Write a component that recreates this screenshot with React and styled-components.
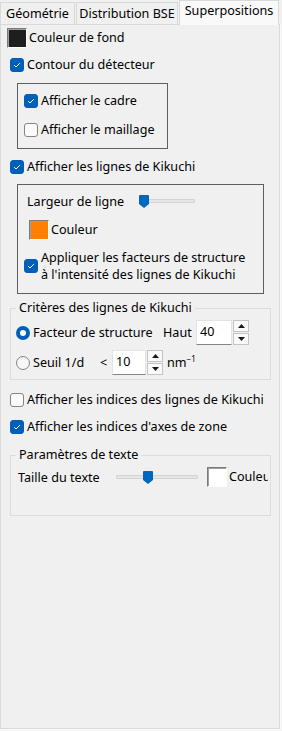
import React from 'react';
import styled, { createGlobalStyle } from 'styled-components';

const GlobalStyle = createGlobalStyle`
  html, body {
    margin: 0;
    padding: 0;
    background: #f0f0f0;
  }
  body {
    font-family: 'Noto Sans', 'Segoe UI', sans-serif;
    font-size: 12.6px;
    color: #000;
  }
`;

const ACCENT = '#005fb8';

const Window = styled.div`
  width: 282px;
  height: 731px;
  display: flex;
  flex-direction: column;
  overflow: hidden;
`;

const TabBar = styled.div`
  display: flex;
  align-items: flex-end;
  height: 24px;
`;

const Tab = styled.div`
  box-sizing: border-box;
  width: ${(p) => p.$width}px;
  height: ${(p) => (p.$active ? 25 : 22)}px;
  margin-bottom: ${(p) => (p.$active ? -1 : 0)}px;
  padding-top: ${(p) => (p.$active ? 2 : 3)}px;
  text-align: center;
  line-height: 16px;
  white-space: nowrap;
  border: 1px solid #d9d9d9;
  border-bottom: none;
  background: ${(p) => (p.$active ? '#f9f9f9' : '#f0f0f0')};
  position: relative;
  z-index: ${(p) => (p.$active ? 1 : 0)};
  & + & {
    margin-left: 1px;
  }
`;

const Pane = styled.div`
  box-sizing: border-box;
  width: 280px;
  height: 705px;
  border: 1px solid #d9d9d9;
  box-shadow: 1px 1px 0 #fbfbfb;
  background: #f0f0f0;
  padding: 3px 0 0 6px;
  display: flex;
  flex-direction: column;
  align-items: flex-start;
`;

const SwatchRow = styled.div`
  display: flex;
  align-items: center;
  gap: 2px;
  margin-top: ${(p) => p.$top || 0}px;
  margin-left: ${(p) => p.$indent || 0}px;
  height: 20px;
  line-height: 16px;
  white-space: nowrap;
`;

const Swatch = styled.span`
  box-sizing: border-box;
  width: 20px;
  height: 20px;
  flex: none;
  border: 1px solid #fcfcfc;
  border-top-color: #7a7a7a;
  border-left-color: #7a7a7a;
  box-shadow: inset 1px 1px 0 #a0a0a0;
  background: ${(p) => p.$color};
`;

const CheckRow = styled.label`
  display: flex;
  align-items: center;
  gap: 3px;
  margin-top: ${(p) => p.$top || 0}px;
  margin-left: ${(p) => p.$indent || 0}px;
  min-height: 14px;
  line-height: ${(p) => (p.$multi ? 17 : 14)}px;
  white-space: nowrap;
`;

const Box = styled.span`
  box-sizing: border-box;
  width: 14px;
  height: 14px;
  flex: none;
  border-radius: 3px;
  border: 1px solid ${(p) => (p.$checked ? ACCENT : '#858585')};
  background: ${(p) => (p.$checked ? ACCENT : '#fbfbfb')};
  display: flex;
  align-items: center;
  justify-content: center;
`;

const RadioDot = styled.span`
  box-sizing: border-box;
  width: 14px;
  height: 14px;
  flex: none;
  border-radius: 50%;
  border: ${(p) => (p.$checked ? `4px solid ${ACCENT}` : '1px solid #858585')};
  background: ${(p) => (p.$checked ? '#ffffff' : '#f7f7f7')};
`;

const Frame = styled.div`
  box-sizing: border-box;
  width: ${(p) => p.$width}px;
  height: ${(p) => p.$height}px;
  margin-top: ${(p) => p.$top}px;
  margin-left: 10px;
  border: 1px solid #5e5e5e;
  padding: ${(p) => p.$pad};
  display: flex;
  flex-direction: column;
  align-items: flex-start;
`;

const Group = styled.fieldset`
  box-sizing: border-box;
  width: 261px;
  min-height: ${(p) => p.$height}px;
  margin: ${(p) => p.$top}px 0 0 3px;
  padding: 4px 0 4px 5px;
  border: 1px solid #dcdcdc;
  display: flex;
  flex-direction: column;
  gap: 5px;
  min-width: 0;
  overflow: hidden;
`;

const Legend = styled.legend`
  padding: 0 3px;
  line-height: 16px;
`;

const Line = styled.div`
  display: flex;
  align-items: center;
  height: ${(p) => p.$height || 14}px;
  white-space: nowrap;
`;

const Cell = styled.div`
  display: flex;
  align-items: center;
  gap: 3px;
  width: ${(p) => p.$width}px;
  flex: none;
  padding-left: ${(p) => p.$pad || 0}px;
  box-sizing: border-box;
`;

const Spin = styled.div`
  display: flex;
  gap: 1px;
  height: 25px;
`;

const SpinField = styled.div`
  box-sizing: border-box;
  width: ${(p) => p.$width}px;
  height: 25px;
  background: #ffffff;
  border: 1px solid #e3e3e3;
  border-bottom: 1px solid #868686;
  padding: 0 0 0 3px;
  line-height: 22px;
`;

const SpinButtons = styled.div`
  display: flex;
  flex-direction: column;
  gap: 1px;
  width: 16px;
`;

const SpinButton = styled.div`
  box-sizing: border-box;
  height: 12px;
  border: 1px solid #c4c4c4;
  background: #f9f9f9;
  display: flex;
  align-items: center;
  justify-content: center;
`;

const SliderBody = styled.div`
  position: relative;
  width: ${(p) => p.$width}px;
  height: 13px;
  flex: none;
`;

const Track = styled.div`
  box-sizing: border-box;
  margin-top: 4px;
  height: 4px;
  border: 1px solid #d3d3d3;
  background: #e6e6e6;
  border-radius: 1px;
`;

const Thumb = styled.svg`
  position: absolute;
  top: 0;
`;

const Sup = styled.sup`
  font-size: 8px;
  line-height: 0;
  vertical-align: 5px;
`;

const ClipRow = styled.div`
  display: flex;
  align-items: center;
  height: 20px;
  width: 252px;
  overflow: hidden;
  white-space: nowrap;
`;

const Check = ({ checked }) => (
  <Box $checked={checked}>
    {checked && (
      <svg width="10" height="10" viewBox="0 0 10 10">
        <path d="M2.2 5.2 L4 7 L7.8 3.2" fill="none" stroke="#fff" strokeWidth="1" />
      </svg>
    )}
  </Box>
);

const CheckItem = ({ checked, children, top, indent, multi }) => (
  <CheckRow $top={top} $indent={indent} $multi={multi}>
    <Check checked={checked} />
    <span>{children}</span>
  </CheckRow>
);

const Slider = ({ width, value }) => (
  <SliderBody $width={width}>
    <Track />
    <Thumb width="10" height="13" viewBox="0 0 10 13" style={{ left: Math.round((width - 10) * value) }}>
      <path d="M1 0 H9 Q10 0 10 1 V9 L5 13 L0 9 V1 Q0 0 1 0 Z" fill="#0067c0" />
    </Thumb>
  </SliderBody>
);

const Arrow = ({ up }) => (
  <svg width="7" height="4" viewBox="0 0 7 4">
    <path d={up ? 'M0 4 L3.5 0 L7 4 Z' : 'M0 0 L7 0 L3.5 4 Z'} fill="#1a1a1a" />
  </svg>
);

const SpinBox = ({ width, value }) => (
  <Spin>
    <SpinField $width={width}>{value}</SpinField>
    <SpinButtons>
      <SpinButton><Arrow up /></SpinButton>
      <SpinButton><Arrow /></SpinButton>
    </SpinButtons>
  </Spin>
);

export default function App() {
  return (
    <Window>
      <GlobalStyle />
      <TabBar>
        <Tab $width={75}>Géométrie</Tab>
        <Tab $width={102}>Distribution BSE</Tab>
        <Tab $width={100} $active>Superpositions</Tab>
      </TabBar>
      <Pane>
        <SwatchRow>
          <Swatch $color="#1e1e1e" />
          <span>Couleur de fond</span>
        </SwatchRow>
        <CheckItem checked top={10} indent={3}>Contour du détecteur</CheckItem>
        <Frame $width={151} $height={66} $top={11} $pad="10px 0 0 6px">
          <CheckItem checked>Afficher le cadre</CheckItem>
          <CheckItem top={15}>Afficher le maillage</CheckItem>
        </Frame>
        <CheckItem checked top={11} indent={3}>Afficher les lignes de Kikuchi</CheckItem>
        <Frame $width={247} $height={110} $top={10} $pad="9px 0 0 6px">
          <Line>
            <Cell $width={115} $pad={3}>Largeur de ligne</Cell>
            <Slider width={56} value={0} />
          </Line>
          <SwatchRow $top={12} $indent={5}>
            <Swatch $color="#ff8000" />
            <span>Couleur</span>
          </SwatchRow>
          <CheckItem checked multi top={9}>
            Appliquer les facteurs de structure
            <br />
            à l'intensité des lignes de Kikuchi
          </CheckItem>
        </Frame>
        <Group $top={6} $height={79}>
          <Legend>Critères des lignes de Kikuchi</Legend>
          <Line $height={25}>
            <Cell $width={147}>
              <RadioDot $checked />
              <span>Facteur de structure</span>
            </Cell>
            <Cell $width={33}>Haut</Cell>
            <SpinBox width={36} value="40" />
          </Line>
          <Line $height={25}>
            <Cell $width={84}>
              <RadioDot />
              <span>Seuil 1/d</span>
            </Cell>
            <Cell $width={12}>&lt;</Cell>
            <SpinBox width={34} value="10" />
            <Cell $width={40} $pad={4}>
              <span>
                nm<Sup>−1</Sup>
              </span>
            </Cell>
          </Line>
        </Group>
        <CheckItem top={13} indent={3}>Afficher les indices des lignes de Kikuchi</CheckItem>
        <CheckItem checked top={13} indent={3}>Afficher les indices d'axes de zone</CheckItem>
        <Group $top={13} $height={69}>
          <Legend>Paramètres de texte</Legend>
          <ClipRow>
            <Cell $width={100} $pad={2}>Taille du texte</Cell>
            <Slider width={82} value={0.38} />
            <SwatchRow $indent={9}>
              <Swatch $color="#ffffff" />
              <span>Couleur</span>
            </SwatchRow>
          </ClipRow>
        </Group>
      </Pane>
    </Window>
  );
}
